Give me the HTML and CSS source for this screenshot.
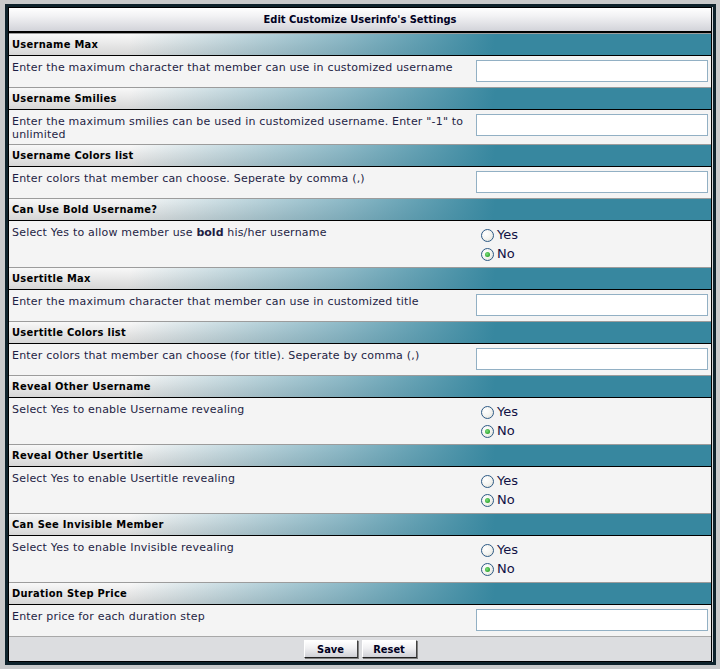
FILE: index.html
```html
<!DOCTYPE html>
<html>
<head>
<meta charset="utf-8">
<title>Edit Customize Userinfo's Settings</title>
<link rel="stylesheet" href="styles.css">
</head>
<body>
<div class="frame">
  <div class="panel">
    <div class="title">Edit Customize Userinfo's Settings</div>

    <div class="sec-head">Username Max</div>
    <div class="sec-row">
      <div class="desc">Enter the maximum character that member can use in customized username</div>
      <div class="ctrl"><input class="field" type="text"></div>
    </div>

    <div class="sec-head">Username Smilies</div>
    <div class="sec-row">
      <div class="desc">Enter the maximum smilies can be used in customized username. Enter "-1" to unlimited</div>
      <div class="ctrl"><input class="field" type="text"></div>
    </div>

    <div class="sec-head">Username Colors list</div>
    <div class="sec-row">
      <div class="desc">Enter colors that member can choose. Seperate by comma (,)</div>
      <div class="ctrl"><input class="field" type="text"></div>
    </div>

    <div class="sec-head">Can Use Bold Username?</div>
    <div class="sec-row">
      <div class="desc">Select Yes to allow member use <b>bold</b> his/her username</div>
      <div class="ctrl radios">
        <label class="opt"><input class="radio" type="radio" name="bold"> Yes</label>
        <label class="opt"><input class="radio" type="radio" name="bold" checked> No</label>
      </div>
    </div>

    <div class="sec-head">Usertitle Max</div>
    <div class="sec-row">
      <div class="desc">Enter the maximum character that member can use in customized title</div>
      <div class="ctrl"><input class="field" type="text"></div>
    </div>

    <div class="sec-head">Usertitle Colors list</div>
    <div class="sec-row">
      <div class="desc">Enter colors that member can choose (for title). Seperate by comma (,)</div>
      <div class="ctrl"><input class="field" type="text"></div>
    </div>

    <div class="sec-head">Reveal Other Username</div>
    <div class="sec-row">
      <div class="desc">Select Yes to enable Username revealing</div>
      <div class="ctrl radios">
        <label class="opt"><input class="radio" type="radio" name="ru"> Yes</label>
        <label class="opt"><input class="radio" type="radio" name="ru" checked> No</label>
      </div>
    </div>

    <div class="sec-head">Reveal Other Usertitle</div>
    <div class="sec-row">
      <div class="desc">Select Yes to enable Usertitle revealing</div>
      <div class="ctrl radios">
        <label class="opt"><input class="radio" type="radio" name="rt"> Yes</label>
        <label class="opt"><input class="radio" type="radio" name="rt" checked> No</label>
      </div>
    </div>

    <div class="sec-head">Can See Invisible Member</div>
    <div class="sec-row">
      <div class="desc">Select Yes to enable Invisible revealing</div>
      <div class="ctrl radios">
        <label class="opt"><input class="radio" type="radio" name="inv"> Yes</label>
        <label class="opt"><input class="radio" type="radio" name="inv" checked> No</label>
      </div>
    </div>

    <div class="sec-head">Duration Step Price</div>
    <div class="sec-row">
      <div class="desc">Enter price for each duration step</div>
      <div class="ctrl"><input class="field" type="text"></div>
    </div>

    <div class="actions">
      <button class="btn" type="button">Save</button>
      <button class="btn" type="button">Reset</button>
    </div>
  </div>
</div>
</body>
</html>
```

FILE: styles.css
```css
html, body {
  margin: 0;
  padding: 0;
  background: #c9cacb;
}
body {
  padding: 4px 4px 4px 5px;
  font-family: "DejaVu Sans", Verdana, sans-serif;
  font-size: 11px;
  color: #1e1e44;
}
.frame {
  border: 3px solid #0f232c;
  background: #d4d5d7;
  padding: 0 1px 0 0;
}
.panel {
  border: 1px solid #000;
  background: #f4f4f4;
}
.title {
  height: 23px;
  line-height: 24px;
  text-align: center;
  font-family: "DejaVu Sans Condensed", "DejaVu Sans", sans-serif;
  font-stretch: condensed;
  font-weight: bold;
  color: #000022;
  background: linear-gradient(#ffffff 0%, #f2f2f4 35%, #d2d3d9 100%);
  border-bottom: 2px solid #000;
}
.sec-head {
  height: 21px;
  line-height: 21px;
  padding-left: 3px;
  font-family: "DejaVu Sans Condensed", "DejaVu Sans", sans-serif;
  font-stretch: condensed;
  font-weight: bold;
  letter-spacing: 0.3px;
  color: #000;
  border-top: 1px solid #9c9c9c;
  border-bottom: 1px solid #000;
  background:
    linear-gradient(100deg, rgba(55,135,160,0) 0px, rgba(55,135,160,0) 120px, rgba(55,135,160,0.55) 330px, #37879f 480px, #37879f 100%),
    linear-gradient(#f8f8f8, #d6d6d6);
}
.sec-row {
  display: grid;
  grid-template-columns: 1fr 239px;
  background: #f4f4f4;
}
.desc {
  padding: 5px 6px 3px 3px;
  line-height: 13px;
  letter-spacing: 0.2px;
}
.desc b {
  letter-spacing: 0;
}
.ctrl {
  padding: 4px 3px 5px 4px;
  display: flex;
  flex-direction: column;
}
.ctrl.radios {
  padding-bottom: 4px;
}
.field {
  box-sizing: border-box;
  width: 232px;
  height: 22px;
  margin: 0;
  border: 1px solid #92b0c4;
  background: #fff;
  font-family: inherit;
  font-size: 11px;
}
.opt {
  display: flex;
  align-items: center;
  height: 19px;
  font-size: 13px;
  color: #111144;
}
.radio {
  appearance: none;
  -webkit-appearance: none;
  box-sizing: border-box;
  width: 13px;
  height: 13px;
  margin: 1px 3px 0 5px;
  border: 1px solid #2d5a85;
  border-radius: 50%;
  background: radial-gradient(circle at 35% 35%, #ffffff 0%, #f4f4f0 50%, #d9d9d2 100%);
  position: relative;
}
.radio:checked::after {
  content: "";
  position: absolute;
  left: 3px;
  top: 3px;
  width: 5px;
  height: 5px;
  border-radius: 50%;
  background: radial-gradient(circle at 40% 40%, #7ee07e 0%, #2fa52f 70%, #1f8a1f 100%);
}
.actions {
  display: flex;
  justify-content: center;
  gap: 4px;
  padding: 3px 0 3px;
  border-top: 1px solid #a8a8a8;
  background: #dcdde0;
}
.btn {
  height: 18px;
  width: 54px;
  padding: 0;
  margin: 0;
  font-family: "DejaVu Sans Condensed", "DejaVu Sans", sans-serif;
  font-stretch: condensed;
  font-size: 11px;
  font-weight: bold;
  color: #000022;
  border: 1px solid;
  border-color: #ffffff #404040 #202020 #ffffff;
  background: linear-gradient(#ffffff 0%, #f0f0f2 45%, #cfd0d6 100%);
  box-shadow: 1px 1px 0 #808080;
}
.btn + .btn {
  width: 55px;
}
```
